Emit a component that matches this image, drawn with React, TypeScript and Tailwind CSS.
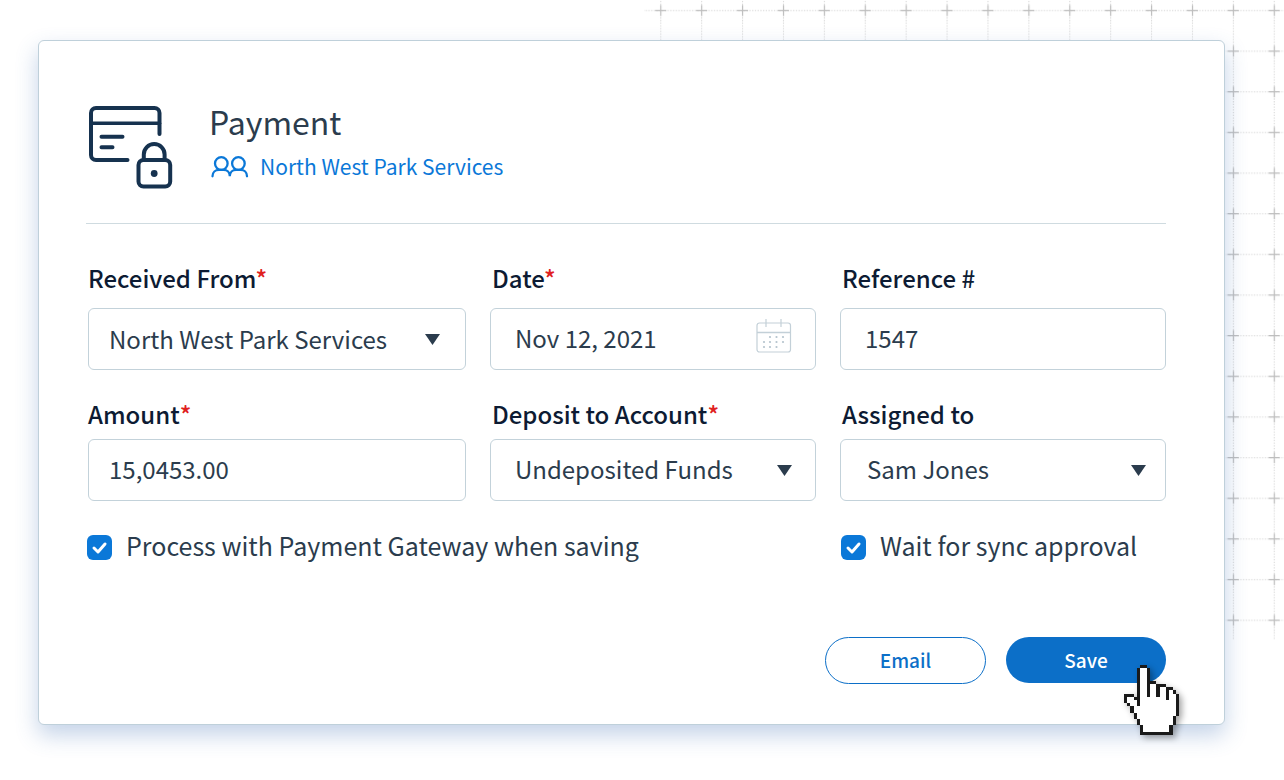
import React from "react";

const HAND = [
  ".....XX..........",
  "....XooX.........",
  "....XooX.........",
  "....XooX.........",
  "....XooX.........",
  "....XooXXX.......",
  "....XooXooXXX....",
  "....XooXooXooXX..",
  "....XooXooXooXoX.",
  "XXX.XooXooXooXooX",
  "XooXXooooooooXooX",
  "XoooXoooooooooooX",
  ".XooXoooooooooooX",
  "..XoooooooooooooX",
  "..XoooooooooooooX",
  "...XooooooooooooX",
  "...XoooooooooooX.",
  "....XooooooooooX.",
  "....XooooooooooX.",
  ".....XooooooooX..",
  ".....XooooooooX..",
  ".....XXXXXXXXXX..",
];

function HandCursor({ className }: { className?: string }) {
  return (
    <svg viewBox="0 0 17 22" shapeRendering="crispEdges" preserveAspectRatio="none" className={className} aria-hidden="true">
      {HAND.flatMap((row, y) =>
        [...row].map((c, x) =>
          c === "." ? null : (
            <rect key={`${x}-${y}`} x={x} y={y} width="1" height="1" fill={c === "X" ? "#1a1a1a" : "#fff"} />
          )
        )
      )}
    </svg>
  );
}

function GridBackdrop() {
  return (
    <svg className="absolute right-0 top-0 h-[640px] w-[640px]" viewBox="0 0 640 640" aria-hidden="true">
      <defs>
        <pattern id="grid" x="-3.7" y="-10" width="40.9" height="40.65" patternUnits="userSpaceOnUse">
          <path d="M0 20.5H40.9" stroke="#d6d6d6" strokeDasharray="1.3 1.43" />
          <path d="M20.5 0V40.65" stroke="#d6d6d6" strokeDasharray="1.3 1.41" />
          <path d="M15 20.5H26M20.5 15V26" stroke="#bdbdbd" strokeWidth="1.2" />
        </pattern>
      </defs>
      <rect width="640" height="640" fill="url(#grid)" />
    </svg>
  );
}

function PaymentIcon() {
  return (
    <svg className="h-[84px] w-[86px]" viewBox="0 0 86 84" fill="none" stroke="#16324f" strokeWidth="4" strokeLinecap="round" aria-hidden="true">
      <path d="M40.5 55H9a5 5 0 0 1-5-5V8a5 5 0 0 1 5-5h58.500a5 5 0 0 1 5 5v21" />
      <path d="M4 18.3h68.500" strokeWidth="3.5" />
      <path d="M14.500 31.7h21M14.500 42.3h11" />
      <rect x="51.5" y="55" width="31.7" height="26.5" rx="5" />
      <path d="M56.800 54v-4.500a10.4 10.4 0 0 1 20.8 0v4.500" />
      <circle cx="67.2" cy="68.5" r="3.4" fill="#16324f" stroke="none" />
    </svg>
  );
}

function PeopleIcon() {
  return (
    <svg className="h-6 w-10" viewBox="0 0 40 24" fill="none" stroke="#0b78d8" strokeWidth="2.3" strokeLinecap="round" aria-hidden="true">
      <circle cx="12.3" cy="9.5" r="6.3" />
      <circle cx="29.4" cy="9.5" r="6.3" />
      <path d="M3.5 22.300c0-4 3-6.500 6.500-6.500h4.600c3.500 0 6.200 2.500 6.200 6.500 0-4 2.800-6.500 6.300-6.500h4.500c3.500 0 6.400 2.500 6.400 6.500" />
    </svg>
  );
}

function CalendarIcon({ className }: { className?: string }) {
  const dots = [
    [14, 19], [20.5, 19], [27, 19],
    [8, 24], [14, 24], [20.5, 24], [27, 24],
    [8, 29], [14, 29], [20.5, 29],
  ];
  return (
    <svg className={className} viewBox="0 0 36 36" fill="none" stroke="#c3d0d8" aria-hidden="true">
      <rect x="1" y="5" width="33.5" height="29" rx="2.5" strokeWidth="1.2" />
      <path d="M1 14.5h33.5" strokeWidth="1.6" />
      <path d="M10 1v8M25 1v8" strokeWidth="1.2" />
      {dots.map(([x, y]) => (
        <circle key={`${x}-${y}`} cx={x} cy={y} r="1.1" fill="#b4c3cd" stroke="none" />
      ))}
    </svg>
  );
}

const control =
  "h-[62px] w-full appearance-none rounded-md border border-[#c3d2da] bg-white text-2xl text-[#2b3c4d] outline-none";

type FieldProps = {
  id: string;
  label: string;
  required?: boolean;
  labelClass: string;
  children: React.ReactNode;
};

function Field({ id, label, required, labelClass, children }: FieldProps) {
  return (
    <div>
      <label htmlFor={id} className={`block text-2xl leading-9 font-medium text-[#0d1b33] ${labelClass}`}>
        {label}
        {required && <span className="text-[#e02020]">*</span>}
      </label>
      <div className="relative">{children}</div>
    </div>
  );
}

function Select({ id, value, className, arrow }: { id: string; value: string; className: string; arrow: string }) {
  return (
    <>
      <select id={id} className={`${control} ${className}`}>
        <option>{value}</option>
      </select>
      <svg className={`pointer-events-none absolute top-[26px] h-[11px] w-[15px] ${arrow}`} viewBox="0 0 15 11" aria-hidden="true">
        <path d="M0 0h15L7.5 11z" fill="#2b3c4d" />
      </svg>
    </>
  );
}

function Check({ id, label }: { id: string; label: string }) {
  return (
    <div className="flex items-center gap-3.5">
      <span className="relative flex">
        <input id={id} type="checkbox" defaultChecked className="size-[25px] appearance-none rounded-md bg-[#0b78d8]" />
        <svg className="pointer-events-none absolute inset-0 size-[25px]" viewBox="0 0 25 25" fill="none" aria-hidden="true">
          <path d="M7 13l4 4 7-8" stroke="#fff" strokeWidth="3" strokeLinecap="round" strokeLinejoin="round" />
        </svg>
      </span>
      <label htmlFor={id} className="pb-1 text-[25px] leading-9 whitespace-nowrap text-[#2b3c4d]">{label}</label>
    </div>
  );
}

export default function App() {
  return (
    <main className="relative min-h-screen overflow-hidden bg-white pt-10 pr-[59px] pb-[54px] pl-[38px] font-['Noto_Sans_CJK_SC',sans-serif]">
      <GridBackdrop />
      <form
        onSubmit={(e) => e.preventDefault()}
        className="relative rounded-md border border-[#bfd0da] bg-white pt-16 pr-[58px] pb-10 pl-[47px] shadow-[0_10px_22px_rgba(60,110,180,0.3)]"
      >
        <header className="flex gap-9 border-b border-[#cfdbe0] pb-[34px] pl-px">
          <PaymentIcon />
          <div>
            <h1 className="text-[32px] leading-8 text-[#2b3c4d]">Payment</h1>
            <a href="#" className="mt-[13px] flex items-center gap-[11px] text-[21px] leading-8 text-[#0b78d8]">
              <PeopleIcon />
              North West Park Services
            </a>
          </div>
        </header>

        <div className="mt-9 grid grid-cols-[378fr_326fr_326fr] gap-x-6 gap-y-[26px] pl-0.5">
          <Field id="from" label="Received From" required labelClass="mb-3">
            <Select id="from" value="North West Park Services" className="pl-5" arrow="right-[26px]" />
          </Field>
          <Field id="date" label="Date" required labelClass="mb-3 pl-0.5">
            <input id="date" defaultValue="Nov 12, 2021" className={`${control} pb-1 pl-6`} />
            <CalendarIcon className="absolute top-2.5 right-6 size-9" />
          </Field>
          <Field id="ref" label="Reference #" labelClass="mb-3 pl-0.5">
            <input id="ref" defaultValue="1547" className={`${control} pb-1 pl-6`} />
          </Field>
          <Field id="amount" label="Amount" required labelClass="mb-[7px]">
            <input id="amount" defaultValue="15,0453.00" className={`${control} pb-1 pl-5`} />
          </Field>
          <Field id="account" label="Deposit to Account" required labelClass="mb-[7px] pl-0.5">
            <Select id="account" value="Undeposited Funds" className="pb-0.5 pl-6" arrow="right-6" />
          </Field>
          <Field id="assigned" label="Assigned to" labelClass="mb-[7px] pl-0.5">
            <Select id="assigned" value="Sam Jones" className="pb-0.5 pl-[26px]" arrow="right-5" />
          </Field>
        </div>

        <div className="mt-[26px] grid grid-cols-[732fr_326fr] gap-x-6 pl-px">
          <Check id="gateway" label="Process with Payment Gateway when saving" />
          <Check id="sync" label="Wait for sync approval" />
        </div>

        <div className="mt-[70px] flex justify-end gap-5">
          <button type="button" className="h-[47px] w-[161px] rounded-full border border-[#0c6fc8] text-[19px] font-medium text-[#0c6fc8]">
            Email
          </button>
          <div className="relative">
            <button type="submit" className="h-[46px] w-[160px] rounded-full bg-[#0c6fc8] text-[19px] font-medium text-white">
              Save
            </button>
            <HandCursor className="pointer-events-none absolute top-7 left-[118px] h-[70px] w-[55px] drop-shadow-[3px_3px_3px_rgba(0,0,0,0.35)]" />
          </div>
        </div>
      </form>
    </main>
  );
}
